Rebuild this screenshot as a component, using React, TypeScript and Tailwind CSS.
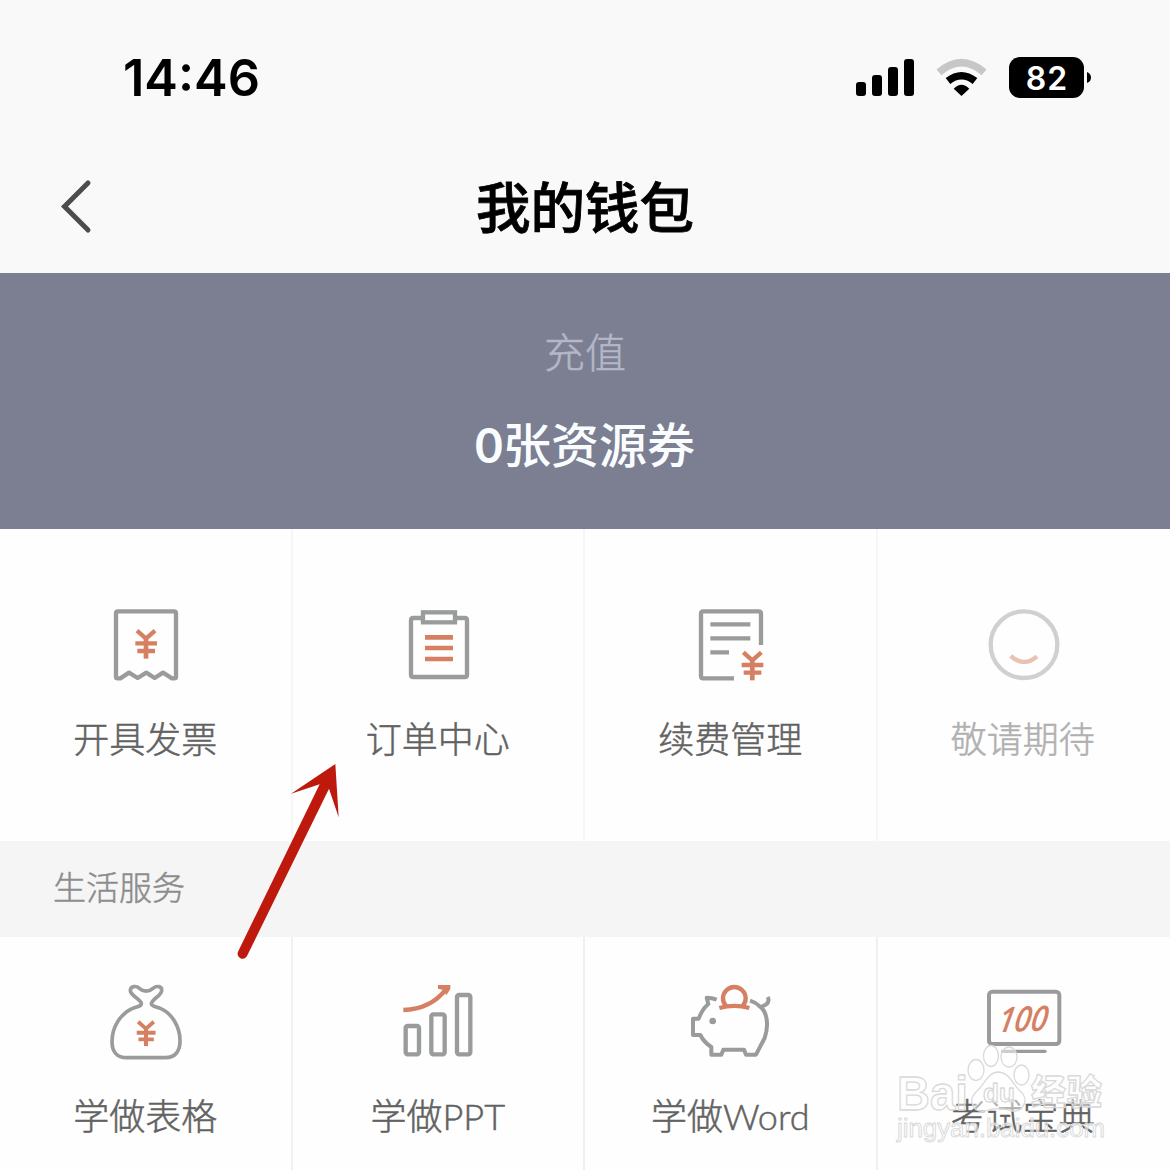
import type { ReactNode } from "react";

const GRAY = "#9a9b9b";
const ORANGE = "#d58062";

type Service = {
  label: string;
  icon: ReactNode;
  muted?: boolean;
};

// Every icon is drawn on a 330 unit canvas, shown at 110px
function Icon({ viewBox, children }: { viewBox: string; children: ReactNode }) {
  return (
    <svg viewBox={viewBox} className="h-[110px] w-[110px] overflow-visible" fill="none" stroke={GRAY} strokeWidth="13">
      {children}
    </svg>
  );
}

function Yen({ x, y, scale = 1 }: { x: number; y: number; scale?: number }) {
  return (
    <g transform={`translate(${x} ${y}) scale(${scale})`} stroke={ORANGE} strokeWidth="13">
      <path d="M-27 -40 L0 -16 L27 -40" />
      <path d="M0 -18 V44" strokeWidth="14" />
      <path d="M-32 -2 H33 M-26 21 H27" />
    </g>
  );
}

const walletServices: Service[] = [
  {
    label: "开具发票",
    icon: (
      <Icon viewBox="3 0 330 330">
        <path
          d="M78 70 Q78 64 84 64 H252 Q258 64 258 70 V260 Q258 265 252 265 H246 L219 248 L194 264 L169 248 L143 264 L117 248 L91 265 H84 Q78 265 78 260 Z"
          strokeLinejoin="round"
        />
        <Yen x={168} y={162} />
      </Icon>
    ),
  },
  {
    label: "订单中心",
    icon: (
      <Icon viewBox="12 0 330 330">
        <path d="M128 84 H100 Q93 84 93 91 V254 Q93 261 100 261 H254 Q261 261 261 254 V91 Q261 84 254 84 H226" />
        <rect x="129" y="67" width="96" height="30" />
        <path d="M135 142 H219 M135 174 H219 M135 207 H219" stroke={ORANGE} strokeWidth="14" />
      </Icon>
    ),
  },
  {
    label: "续费管理",
    icon: (
      <Icon viewBox="-12 0 330 330">
        <path d="M162 265 H70 Q63 265 63 258 V71 Q63 64 70 64 H236 Q243 64 243 71 V165" />
        <path d="M91 103 H211 M91 145 H211 M91 187 H147" />
        <Yen x={217} y={227} />
      </Icon>
    ),
  },
  {
    label: "敬请期待",
    muted: true,
    icon: (
      <Icon viewBox="-3 0 330 330">
        <circle cx="162" cy="164" r="100" stroke="#cfd0cf" />
        <path d="M122 198 Q162 233 201 199" stroke="#eac2b4" />
      </Icon>
    ),
  },
];

const lifeServices: Service[] = [
  {
    label: "学做表格",
    icon: (
      <Icon viewBox="3 0 330 330">
        <path
          d="M154 100 C150 85 122 78 121 62 C121 48 138 46 148 55 C160 66 177 66 189 55 C200 46 216 48 215 62 C213 78 187 86 184 101 C184 109 196 109 211 115 C246 129 270 172 270 211 C271 243 256 263 226 263 H110 C80 263 66 244 66 215 C66 171 92 130 128 115 C143 109 155 109 154 100 Z"
          strokeWidth="11"
        />
        <Yen x={168} y={190} scale={0.87} />
      </Icon>
    ),
  },
  {
    label: "学做PPT",
    icon: (
      <Icon viewBox="12 0 330 330">
        <rect x="77" y="168" width="40" height="85" rx="6" />
        <rect x="154" y="133" width="40" height="120" rx="6" />
        <rect x="231" y="75" width="40" height="178" rx="6" />
        <path d="M70 120 C126 119 168 97 200 56" stroke={ORANGE} />
        <path d="M174 45 H211 V57 L199 76 L190 60 L174 56 Z" fill={ORANGE} stroke="none" />
      </Icon>
    ),
  },
  {
    label: "学做Word",
    icon: (
      <Icon viewBox="18 0 330 330">
        <path
          d="M140 89 Q126 83 110 83 L115 102 Q96 118 86 146 H69 V195 H91 Q102 217 124 231 V254 H154 L160 239 H222 L228 254 H258 L284 204 C297 166 292 125 269 109 Q257 97 240 92 M269 111 Q282 109 291 101 Q299 91 293 81"
          strokeWidth="12"
          strokeLinejoin="round"
        />
        <circle cx="128" cy="153" r="10" fill={GRAY} stroke="none" />
        <path d="M168 108 A34 34 0 1 1 218 108" stroke={ORANGE} />
        <path d="M148 114 Q193 101 238 114" stroke={ORANGE} />
      </Icon>
    ),
  },
  {
    label: "考试宝典",
    icon: (
      <Icon viewBox="267 0 330 330">
        <rect x="327" y="65" width="211" height="157" rx="10" strokeWidth="12" />
        <path d="M369 244 H495" strokeLinecap="round" strokeWidth="10" />
        <text
          x="0"
          y="0"
          transform="translate(350 187) rotate(-2) skewX(-12) scale(0.86 1)"
          fill={ORANGE}
          stroke="none"
          className="font-['Open_Sans',sans-serif] text-[104px] font-semibold italic"
        >
          100
        </text>
      </Icon>
    ),
  },
];

function StatusBar() {
  return (
    <div className="flex h-[140px] items-center justify-between bg-[#f9f9f9] pt-[14px] pr-[78px] pl-[123px]">
      <span className="pt-[3px] font-['Inter',sans-serif] text-[50.5px] leading-none font-semibold text-black">14:46</span>
      <svg viewBox="0 0 240 44" className="h-[44px] w-[240px]">
        {/* Signal */}
        <rect x="4" y="27" width="10" height="14" rx="3" />
        <rect x="20" y="20" width="10" height="21" rx="3" />
        <rect x="36" y="12" width="10" height="29" rx="3" />
        <rect x="52" y="4" width="10" height="37" rx="3" />
        {/* Wifi */}
        <path d="M87 17.3 Q109.5 -1.9 132 17.3" fill="none" stroke="#c7c7c7" strokeWidth="7.5" />
        <path d="M96 26 Q109.5 15.5 123 26" fill="none" stroke="#000" strokeWidth="7.5" />
        <path d="M101.7 33.7 Q109.5 25.7 117.3 33.7 L109.5 41 Z" />
        {/* Battery */}
        <rect x="157" y="2" width="75" height="41" rx="11" />
        <path d="M235 17 Q239 18.5 239 22.5 Q239 26.5 235 28 Z" />
        <text
          x="195"
          y="34.5"
          textAnchor="middle"
          fill="#fff"
          letterSpacing="1"
          className="font-['Inter',sans-serif] text-[32px] font-semibold"
        >
          82
        </text>
      </svg>
    </div>
  );
}

function ServiceCell({ service, className }: { service: Service; className: string }) {
  return (
    <div className={`flex flex-col items-center last:shadow-none ${className}`}>
      {service.icon}
      <span
        className={`-translate-x-px text-[36px] leading-[54px] font-light whitespace-nowrap [-webkit-text-stroke:0.5px] ${service.muted ? "text-[#b0b0b0]" : "text-[#626262]"}`}
      >
        {service.label}
      </span>
    </div>
  );
}

function Watermark() {
  return (
    <svg
      viewBox="0 0 220 110"
      className="absolute top-[1040px] left-[890px] h-[110px] w-[220px]"
      fill="#fff"
      fillOpacity="0.5"
      stroke="#d9d9d9"
      strokeWidth="1.3"
      strokeLinejoin="round"
    >
      <text x="7" y="70" textLength="71" lengthAdjust="spacingAndGlyphs" className="font-['Liberation_Sans',sans-serif] text-[48px] font-bold">
        Bai
      </text>
      <text x="141" y="65" textLength="71" className="font-['Noto_Sans_CJK_SC',sans-serif] text-[35px] font-black">
        经验
      </text>
      <text
        x="7"
        y="97"
        textLength="208"
        lengthAdjust="spacingAndGlyphs"
        strokeWidth="0.9"
        className="font-['Liberation_Sans',sans-serif] text-[25px]"
      >
        jingyan.baidu.com
      </text>
      <ellipse cx="86" cy="30" rx="8" ry="10.5" />
      <ellipse cx="101" cy="16" rx="7.5" ry="10.5" />
      <ellipse cx="119" cy="17" rx="8" ry="10" />
      <ellipse cx="131.5" cy="35" rx="7.5" ry="10" />
      <path d="M109 32 C120 33 123 45 130 51 C140 59 133 73 122 71 C113 68 103 68 95 71 C82 73 78 60 86 52 C95 45 97 32 109 32 Z" />
      <text x="93" y="62" className="font-['Liberation_Sans',sans-serif] text-[26px] font-bold">
        du
      </text>
    </svg>
  );
}

export default function App() {
  return (
    <div className="relative h-[1170px] w-[1170px] overflow-hidden bg-[#fefefe] font-['Lato','Noto_Sans_CJK_SC',sans-serif]">
      <StatusBar />

      {/* Title bar */}
      <header className="grid h-[133px] grid-cols-[1fr_auto_1fr] items-center bg-[#f9f9f9]">
        <svg viewBox="0 0 40 60" className="ml-[56px] h-[60px] w-[40px]" fill="none" stroke="#4c4c4c" strokeWidth="5">
          <path d="M32 6 L8.5 29.5 L32 53" strokeLinecap="round" />
        </svg>
        <h1 className="pt-[2px] text-[54.5px] font-medium text-black [-webkit-text-stroke:0.8px]">我的钱包</h1>
      </header>

      {/* Balance */}
      <section className="flex h-[256px] flex-col items-center bg-[#7b7f91] pt-[48px]">
        <p className="text-[41px] leading-[64px] font-light text-[#b3b7c8] [-webkit-text-stroke:0.5px]">充值</p>
        <p className="mt-[24px] text-[48px] leading-[72px] font-medium text-[#fafdff]">
          <span className="font-bold">0</span>张资源券
        </p>
      </section>

      <section className="grid h-[312px] grid-cols-4">
        {walletServices.map((service) => (
          <ServiceCell
            key={service.label}
            service={service}
            className="gap-3 pt-[61px] shadow-[inset_-2px_0_#f6f6f6]"
          />
        ))}
      </section>

      <h2 className="flex h-[96px] items-center bg-[#f5f5f5] pb-[3px] pl-[53px] text-[33px] font-light text-[#8c8c8c] [-webkit-text-stroke:0.5px]">
        生活服务
      </h2>

      <section className="grid h-[233px] grid-cols-4">
        {lifeServices.map((service) => (
          <ServiceCell key={service.label} service={service} className="gap-[9px] pt-[33px] shadow-[inset_-2px_0_#f0f0f0]" />
        ))}
      </section>

      {/* Pointer to the order centre */}
      <svg viewBox="0 0 420 660" className="absolute top-[750px] left-[220px] h-[220px] w-[140px]" fill="#bd190c">
        <path d="M346 42 L356 202 L327 116 L81 618 A15 15 0 0 1 54 605 L299 103 L213 131 Z" />
      </svg>

      <Watermark />
    </div>
  );
}
